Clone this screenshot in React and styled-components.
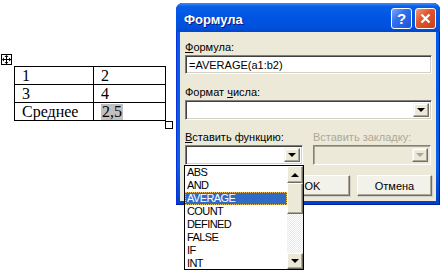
import React from 'react';
import styled, { createGlobalStyle } from 'styled-components';

const GlobalStyle = createGlobalStyle`
  html, body {
    margin: 0;
    padding: 0;
    background: #ffffff;
  }
`;

/**
 *  Page and document
 */
const Page = styled.div`
  position: relative;
  width: 444px;
  height: 278px;
  overflow: hidden;
  background: #ffffff;
  font-family: "Liberation Sans", Arial, sans-serif;
`;

const Doc = styled.div`
  padding: 66px 0 0 14px;
`;

const TableWrap = styled.div`
  position: relative;
  display: inline-block;
`;

const MoveHandle = styled.div`
  position: absolute;
  left: -13px;
  top: -12px;
  width: 9px;
  height: 9px;
  border: 1px solid #000;
  background: #fff;
  display: flex;
  align-items: center;
  justify-content: center;
`;

const ResizeHandle = styled.div`
  position: absolute;
  right: -7px;
  bottom: -8px;
  width: 6px;
  height: 6px;
  border: 1px solid #000;
  background: #fff;
`;

const DocTable = styled.table`
  border-collapse: collapse;
  font-family: "Liberation Serif", "Times New Roman", serif;
  font-size: 16px;
  color: #000;
`;

const Cell = styled.td`
  border: 1px solid #000;
  height: 17px;
  padding: 0 0 0 7px;
  width: ${p => p.$w}px;
  line-height: 17px;
  vertical-align: middle;
`;

const Selected = styled.span`
  background: #c0c0c0;
  display: inline-block;
  padding: 0 1px;
  line-height: 16px;
`;

/**
 *  Window
 */
const Window = styled.div`
  position: absolute;
  left: 176px;
  top: 3px;
  width: 264px;
  height: 202px;
  display: flex;
  flex-direction: column;
  border-radius: 7px 7px 0 0;
  background: linear-gradient(to bottom, #0058ee 0%, #0a5ee6 80%, #0040c8 100%);
  box-shadow: inset 0 -1px 0 #001ea0, inset -1px 0 0 #001ea0, inset 1px 0 0 #0831d9;
`;

const TitleBar = styled.div`
  height: 29px;
  flex: none;
  display: flex;
  align-items: center;
  padding: 0 4px 0 8px;
  border-radius: 7px 7px 0 0;
  background: linear-gradient(to bottom, #3d8cf7 0%, #0a5fe8 12%, #0054e3 50%, #0050dc 85%, #0046c8 100%);
`;

const Title = styled.div`
  flex: 1;
  color: #fff;
  font-weight: bold;
  font-size: 13px;
  padding-top: 3px;
  text-shadow: 1px 1px 0 #0a1883;
`;

const CaptionButton = styled.div`
  width: 19px;
  height: 19px;
  margin-left: ${p => (p.$first ? 0 : 3)}px;
  margin-top: 2px;
  border: 1px solid #fff;
  border-radius: 3px;
  display: flex;
  align-items: center;
  justify-content: center;
  background: ${p => (p.$close
    ? 'linear-gradient(135deg, #f09a7a 0%, #e2562f 40%, #c8401c 100%)'
    : 'linear-gradient(135deg, #7ea8f8 0%, #2f6ff0 40%, #1a55d8 100%)')};
  color: #fff;
  font-weight: bold;
  font-size: 15px;
`;

const Client = styled.div`
  flex: 1;
  margin: 0 4px 4px 4px;
  background: #ece9d8;
  padding: 9px 4px 0 5px;
  display: flex;
  flex-direction: column;
  font-size: 11px;
  color: #000;
`;

const Label = styled.div`
  line-height: 13px;
  height: 13px;
  margin-top: ${p => p.$mt || 0}px;
  color: ${p => (p.$disabled ? '#aca899' : '#000')};
  white-space: nowrap;
`;

const U = styled.span`
  text-decoration: underline;
`;

const Field = styled.div`
  height: 19px;
  margin-top: 1px;
  box-sizing: border-box;
  background: #fff;
  border-top: 1px solid #808080;
  border-left: 1px solid #808080;
  border-right: 1px solid #fff;
  border-bottom: 1px solid #fff;
  box-shadow: inset 1px 1px 0 #404040, inset -1px -1px 0 #d4d0c8;
  padding: 2px 0 0 3px;
  font-size: 11px;
  line-height: 14px;
`;

const Combo = styled.div`
  position: relative;
  width: ${p => (p.$w ? `${p.$w}px` : 'auto')};
  height: 20px;
  margin-top: 1px;
  box-sizing: border-box;
  background: ${p => (p.$disabled ? '#ece9d8' : '#fff')};
  border-top: 1px solid #808080;
  border-left: 1px solid #808080;
  border-right: 1px solid #fff;
  border-bottom: 1px solid #fff;
  box-shadow: ${p => (p.$disabled
    ? 'inset 1px 1px 0 #aca899, inset -1px -1px 0 #ece9d8'
    : 'inset 1px 1px 0 #404040, inset -1px -1px 0 #d4d0c8')};
  display: flex;
  justify-content: flex-end;
  padding: 2px;
`;

const ArrowBox = styled.div`
  width: 16px;
  height: 100%;
  box-sizing: border-box;
  background: #ece9d8;
  border-top: 1px solid #f4f3ee;
  border-left: 1px solid #f4f3ee;
  border-right: 1px solid #716f64;
  border-bottom: 1px solid #716f64;
  box-shadow: inset -1px -1px 0 #aca899, inset 1px 1px 0 #fff;
  display: flex;
  align-items: center;
  justify-content: center;
`;

const Tri = styled.div`
  width: 0;
  height: 0;
  border-left: 4px solid transparent;
  border-right: 4px solid transparent;
  ${p => (p.$up
    ? `border-bottom: 4px solid ${p.$c || '#000'};`
    : `border-top: 4px solid ${p.$c || '#000'};`)}
`;

const Row = styled.div`
  display: flex;
  gap: 10px;
  margin-top: ${p => p.$mt || 0}px;
`;

const Col = styled.div`
  width: 118px;
  display: flex;
  flex-direction: column;
`;

const Buttons = styled.div`
  display: flex;
  justify-content: flex-end;
  gap: 7px;
  margin-top: 10px;
  padding-right: 0;
`;

const Button = styled.div`
  width: 75px;
  height: 21px;
  box-sizing: border-box;
  background: #f2f1ea;
  border-top: 1px solid #fff;
  border-left: 1px solid #fff;
  border-right: 1px solid #716f64;
  border-bottom: 1px solid #716f64;
  box-shadow: inset -1px -1px 0 #aca899, 1px 1px 0 #d4d0c8;
  display: flex;
  align-items: center;
  justify-content: center;
  font-size: 11px;
`;

/**
 *  Drop-down list
 */
const List = styled.div`
  position: absolute;
  left: -2px;
  top: 100%;
  width: 120px;
  height: 105px;
  box-sizing: border-box;
  border: 1px solid #000;
  background: #fff;
  display: flex;
  z-index: 2;
  margin-top: 1px;
`;

const Items = styled.div`
  flex: 1;
  overflow: hidden;
`;

const Item = styled.div`
  height: 13px;
  line-height: 13px;
  padding-left: 2px;
  font-size: 11px;
  letter-spacing: -0.6px;
  color: ${p => (p.$sel ? '#fff' : '#000')};
  background: ${p => (p.$sel ? '#316ac5' : '#fff')};
  outline: ${p => (p.$sel ? '1px dotted #f0c060' : 'none')};
  outline-offset: -1px;
  text-align: left;
`;

const ScrollBar = styled.div`
  width: 16px;
  display: flex;
  flex-direction: column;
  background-color: #f4f3ee;
  background-image: repeating-conic-gradient(#ffffff 0% 25%, #ece9d8 0% 50%);
  background-size: 2px 2px;
`;

const ScrollBtn = styled.div`
  height: ${p => p.$h}px;
  flex: none;
  box-sizing: border-box;
  background: #ece9d8;
  border-top: 1px solid #fff;
  border-left: 1px solid #fff;
  border-right: 1px solid #716f64;
  border-bottom: 1px solid #716f64;
  box-shadow: inset -1px -1px 0 #aca899;
  display: flex;
  align-items: center;
  justify-content: center;
`;

const Track = styled.div`
  flex: 1;
`;

const functions = ['ABS', 'AND', 'AVERAGE', 'COUNT', 'DEFINED', 'FALSE', 'IF', 'INT'];

function MoveIcon() {
  return (
    <svg width="9" height="9" viewBox="0 0 9 9">
      <path d="M4.5 0.5 V8.5 M0.5 4.5 H8.5" stroke="#000" strokeWidth="1" shapeRendering="crispEdges" />
      <path d="M4.5 0 L2.5 2 H6.5 Z M4.5 9 L2.5 7 H6.5 Z M0 4.5 L2 2.5 V6.5 Z M9 4.5 L7 2.5 V6.5 Z" fill="#000" />
    </svg>
  );
}

function CloseIcon() {
  return (
    <svg width="11" height="11" viewBox="0 0 11 11">
      <path d="M1.5 1.5 L9.5 9.5 M9.5 1.5 L1.5 9.5" stroke="#fff" strokeWidth="2.2" />
    </svg>
  );
}

export default function App() {
  return (
    <Page>
      <GlobalStyle />
      <Doc>
        <TableWrap>
          <MoveHandle><MoveIcon /></MoveHandle>
          <DocTable>
            <tbody>
              <tr><Cell $w={71}>1</Cell><Cell $w={64}>2</Cell></tr>
              <tr><Cell $w={71}>3</Cell><Cell $w={64}>4</Cell></tr>
              <tr><Cell $w={71}>Среднее</Cell><Cell $w={64}><Selected>2,5</Selected></Cell></tr>
            </tbody>
          </DocTable>
          <ResizeHandle />
        </TableWrap>
      </Doc>

      <Window>
        <TitleBar>
          <Title>Формула</Title>
          <CaptionButton $first>?</CaptionButton>
          <CaptionButton $close><CloseIcon /></CaptionButton>
        </TitleBar>
        <Client>
          <Label><U>Ф</U>ормула:</Label>
          <Field>=AVERAGE(a1:b2)</Field>
          <Label $mt={12}>Формат <U>ч</U>исла:</Label>
          <Combo><ArrowBox><Tri /></ArrowBox></Combo>
          <Row $mt={11}>
            <Col>
              <Label><U>В</U>ставить функцию:</Label>
              <Combo $w={118}>
                <ArrowBox><Tri /></ArrowBox>
                <List>
                  <Items>
                    {functions.map(f => (
                      <Item key={f} $sel={f === 'AVERAGE'}>{f}</Item>
                    ))}
                  </Items>
                  <ScrollBar>
                    <ScrollBtn $h={17}><Tri $up /></ScrollBtn>
                    <ScrollBtn $h={31} />
                    <Track />
                    <ScrollBtn $h={16}><Tri /></ScrollBtn>
                  </ScrollBar>
                </List>
              </Combo>
            </Col>
            <Col>
              <Label $disabled>Вставить закладку:</Label>
              <Combo $w={118} $disabled><ArrowBox><Tri $c="#aca899" /></ArrowBox></Combo>
            </Col>
          </Row>
          <Buttons>
            <Button>OK</Button>
            <Button>Отмена</Button>
          </Buttons>
        </Client>
      </Window>
    </Page>
  );
}
